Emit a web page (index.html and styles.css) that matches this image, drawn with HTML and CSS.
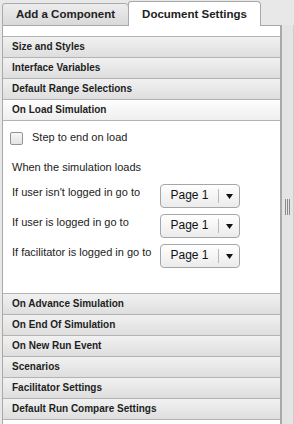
FILE: index.html
```html
<!DOCTYPE html>
<html lang="en">
<head>
    <meta charset="UTF-8">
    <title>Document Settings</title>
    <link rel="stylesheet" href="styles.css">
</head>
<body>
    <div class="layout">
        <div class="main">
            <div class="tabs">
                <div class="tab">Add a Component</div>
                <div class="tab tab-active">Document Settings</div>
                <div class="tab-fill"></div>
            </div>

            <div class="panel">
                <div class="accordion">
                    <div class="acc-head">Size and Styles</div>
                    <div class="acc-head">Interface Variables</div>
                    <div class="acc-head">Default Range Selections</div>
                    <div class="acc-head acc-open">On Load Simulation</div>
                    <div class="acc-body">
                        <label class="check-row">
                            <span class="checkbox"></span>
                            <span>Step to end on load</span>
                        </label>
                        <div class="note">When the simulation loads</div>
                        <div class="goto-grid">
                            <div class="goto-label">If user isn't logged in go to</div>
                            <div class="select">
                                <span class="select-value">Page 1</span>
                                <span class="select-arrow"><svg width="7" height="5" viewBox="0 0 7 5"><polygon points="0,0 7,0 3.5,5" fill="#111"/></svg></span>
                            </div>
                            <div class="goto-label">If user is logged in go to</div>
                            <div class="select">
                                <span class="select-value">Page 1</span>
                                <span class="select-arrow"><svg width="7" height="5" viewBox="0 0 7 5"><polygon points="0,0 7,0 3.5,5" fill="#111"/></svg></span>
                            </div>
                            <div class="goto-label">If facilitator is logged in go to</div>
                            <div class="select">
                                <span class="select-value">Page 1</span>
                                <span class="select-arrow"><svg width="7" height="5" viewBox="0 0 7 5"><polygon points="0,0 7,0 3.5,5" fill="#111"/></svg></span>
                            </div>
                        </div>
                    </div>
                    <div class="acc-head">On Advance Simulation</div>
                    <div class="acc-head">On End Of Simulation</div>
                    <div class="acc-head">On New Run Event</div>
                    <div class="acc-head">Scenarios</div>
                    <div class="acc-head">Facilitator Settings</div>
                    <div class="acc-head">Default Run Compare Settings</div>
                </div>
            </div>
        </div>

        <div class="splitter">
            <div class="grip"></div>
        </div>
    </div>
</body>
</html>
```

FILE: styles.css
```css
body {
    margin: 0;
    background: #e8e8e8;
    font-family: "Liberation Sans", Arial, sans-serif;
    color: #222;
    overflow: hidden;
}

.layout {
    display: flex;
    width: 294px;
    height: 424px;
}

.main {
    width: 281px;
    padding-left: 2px;
    box-sizing: border-box;
    display: flex;
    flex-direction: column;
}

/* tabs */
.tabs {
    display: flex;
    align-items: flex-end;
    height: 26px;
}

.tab {
    box-sizing: border-box;
    width: 127px;
    height: 23px;
    padding-bottom: 2px;
    border: 1px solid #a9a9a9;
    border-radius: 3px 4px 0 0;
    background: linear-gradient(#ededed, #d9d9d9);
    font-size: 11.5px;
    font-weight: bold;
    display: flex;
    align-items: center;
    justify-content: center;
}

.tab-active {
    width: 133px;
    height: 25px;
    margin-left: -1px;
    padding-bottom: 0;
    border-bottom: none;
    background: #fff;
    position: relative;
}

.tab-fill {
    flex: 1;
    height: 0;
    border-bottom: 1px solid #a9a9a9;
    border-right: 1px solid #a9a9a9;
}

/* panel + accordion */
.panel {
    flex: 1;
    background: #fff;
    border-left: 1px solid #a9a9a9;
    border-right: 1px solid #a9a9a9;
    padding-top: 10px;
}

.accordion {
    border-top: 1px solid #b3b3b3;
}

.acc-head {
    height: 20px;
    line-height: 20px;
    padding-left: 9px;
    border-bottom: 1px solid #b3b3b3;
    background: linear-gradient(#f1f1f1, #dedede);
    font-size: 10px;
    font-weight: bold;
    color: #1e1e1e;
}

.acc-open {
    background: linear-gradient(#fdfdfd, #efefef);
}

.acc-body {
    box-sizing: border-box;
    height: 173px;
    padding: 9px 0 0 9px;
    border-bottom: 1px solid #b3b3b3;
    font-size: 11px;
    line-height: 14px;
}

.check-row {
    display: flex;
    align-items: flex-start;
    gap: 9px;
}

.checkbox {
    box-sizing: border-box;
    width: 13px;
    height: 13px;
    margin: 2px 0 0 -2px;
    border: 1px solid #939393;
    border-radius: 2px;
    background: linear-gradient(#f7f7f7, #e3e3e3);
}

.note {
    margin-top: 15px;
}

.goto-grid {
    display: grid;
    grid-template-columns: 148px 80px;
    row-gap: 6px;
    margin-top: 10px;
}

.goto-label {
    margin-top: 1px;
}

.select {
    box-sizing: border-box;
    height: 24px;
    display: flex;
    border: 1px solid #a6a6a6;
    border-radius: 4px;
    background: linear-gradient(#ffffff, #ebebeb);
}

.select-value {
    width: 57px;
    text-align: center;
    font-size: 12px;
    line-height: 21px;
    color: #111;
}

.select-arrow {
    flex: 1;
    display: flex;
    align-items: center;
    justify-content: center;
    margin: 4px 0;
    border-left: 1px solid #b9b9b9;
}

.select-arrow svg {
    display: block;
}

/* splitter on the right */
.splitter {
    flex: 1;
    margin-top: 25px;
    padding-top: 174px;
    border-left: 1px solid #a9a9a9;
    border-right: 1px solid #cfcfcf;
    background: #e4e4e4;
    box-sizing: border-box;
}

.grip {
    width: 3px;
    height: 16px;
    margin-left: 3px;
    border-left: 1px solid #8a8a8a;
    border-right: 1px solid #8a8a8a;
    background: linear-gradient(90deg, transparent 1px, #8a8a8a 1px, #8a8a8a 2px, transparent 2px);
}
```
